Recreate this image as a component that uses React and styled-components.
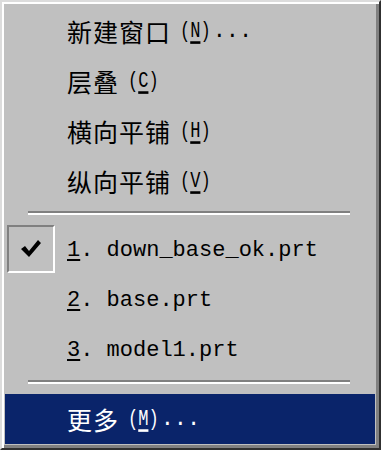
import React from 'react'
import styled, { createGlobalStyle } from 'styled-components'

const GlobalStyle = createGlobalStyle`
  html, body {
    margin: 0;
    padding: 0;
    background: #c0c0c0;
  }
`

const windowItems = [
  { label: '新建窗口', key: 'N', dots: true },
  { label: '层叠', key: 'C' },
  { label: '横向平铺', key: 'H' },
  { label: '纵向平铺', key: 'V' },
]

const recentFiles = [
  { num: '1', name: 'down_base_ok.prt', checked: true },
  { num: '2', name: 'base.prt' },
  { num: '3', name: 'model1.prt' },
]

const CheckIcon = () => (
  <svg width="22" height="20" viewBox="0 0 22 20">
    <path d="M1 10 L5 7 L9 12 L18 1 L21 4 L9 18 Z" fill="#000" />
  </svg>
)

const App = () => {
  return (
    <>
      <GlobalStyle />
      <Menu>
        {windowItems.map((item) => (
          <Row key={item.key}>
            <Label>{item.label}</Label>
            <Mnemonic>(<u>{item.key}</u>)</Mnemonic>
            {item.dots && <Dots>...</Dots>}
          </Row>
        ))}
        <Separator />
        {recentFiles.map((file) => (
          <Row key={file.num}>
            {file.checked && (
              <CheckBox>
                <CheckIcon />
              </CheckBox>
            )}
            <FileName>
              <u>{file.num}</u>. {file.name}
            </FileName>
          </Row>
        ))}
        <Separator />
        <Row $active>
          <Label>更多</Label>
          <Mnemonic>(<u>M</u>)</Mnemonic>
          <Dots>...</Dots>
        </Row>
      </Menu>
    </>
  )
}

const Menu = styled.div`
  box-sizing: border-box;
  width: 381px;
  height: 450px;
  background: #c0c0c0;
  border: 2px solid;
  border-color: #dcdcdc #303030 #303030 #dcdcdc;
  box-shadow: inset 2px 2px 0 #ffffff, inset -3px -3px 0 #808080;
  padding: 4px 4px 4px 3px;
  display: flex;
  flex-direction: column;
`

const Row = styled.div`
  position: relative;
  height: 50px;
  display: flex;
  align-items: center;
  padding-left: 62px;
  color: ${(p) => (p.$active ? '#ffffff' : '#000000')};
  background: ${(p) => (p.$active ? '#0a246a' : 'transparent')};
  u {
    text-decoration: underline;
    text-underline-offset: 3px;
    text-decoration-thickness: 2px;
  }
`

const Label = styled.span`
  font-family: "Noto Sans CJK SC", sans-serif;
  font-size: 25px;
  letter-spacing: 1px;
  line-height: 1;
`

const Mnemonic = styled.span`
  font-family: "Liberation Mono", monospace;
  font-size: 17px;
  margin-left: 9px;
  transform: scaleY(1.3);
  display: inline-block;
`

const Dots = styled.span`
  font-family: "Liberation Mono", monospace;
  font-size: 22px;
  margin-left: 2px;
`

const FileName = styled.span`
  font-family: "Liberation Mono", monospace;
  font-size: 22px;
  white-space: pre;
`

const CheckBox = styled.div`
  position: absolute;
  left: 2px;
  top: 0;
  box-sizing: border-box;
  width: 48px;
  height: 48px;
  border: 2px solid;
  border-color: #808080 #ffffff #ffffff #808080;
  display: flex;
  align-items: center;
  justify-content: center;
`

const Separator = styled.div`
  height: 19px;
  display: flex;
  align-items: flex-start;
  padding: 5px 25px 0 23px;
  box-sizing: border-box;
  &::before {
    content: '';
    flex: 1;
    border-top: 2px solid #808080;
    border-bottom: 2px solid #ffffff;
  }
`

export default App
